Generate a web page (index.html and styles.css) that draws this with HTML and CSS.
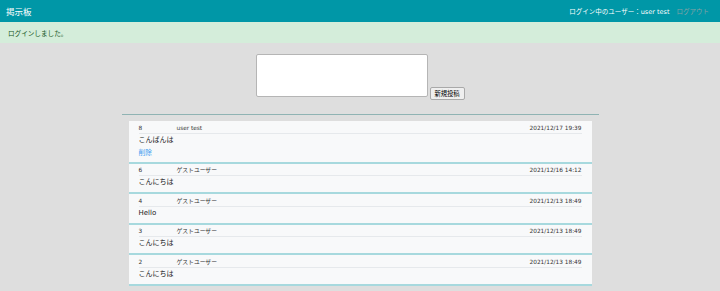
FILE: index.html
```html
<!DOCTYPE html>
<html lang="ja">
<head>
    <meta charset="UTF-8">
    <title>掲示板</title>
    <link rel="stylesheet" href="styles.css">
</head>
<body>

    <div class="header">
        <div class="title">掲示板</div>
        <div class="user-info">
            ログイン中のユーザー：user test
            <a class="logout">ログアウト</a>
        </div>
    </div>

    <div class="flash">ログインしました。</div>

    <form class="post-form">
        <textarea class="post-input"></textarea>
        <button type="button" class="post-btn">新規投稿</button>
    </form>

    <hr class="divider">

    <!-- Posts -->
    <div class="posts">
        <div class="post">
            <div class="post-head">
                <span class="post-id">8</span>
                <span class="post-name">user test</span>
                <span class="post-date">2021/12/17 19:39</span>
            </div>
            <div class="post-body">こんばんは</div>
            <a class="delete">削除</a>
        </div>
        <div class="post">
            <div class="post-head">
                <span class="post-id">6</span>
                <span class="post-name">ゲストユーザー</span>
                <span class="post-date">2021/12/16 14:12</span>
            </div>
            <div class="post-body">こんにちは</div>
        </div>
        <div class="post">
            <div class="post-head">
                <span class="post-id">4</span>
                <span class="post-name">ゲストユーザー</span>
                <span class="post-date">2021/12/13 18:49</span>
            </div>
            <div class="post-body">Hello</div>
        </div>
        <div class="post">
            <div class="post-head">
                <span class="post-id">3</span>
                <span class="post-name">ゲストユーザー</span>
                <span class="post-date">2021/12/13 18:49</span>
            </div>
            <div class="post-body">こんにちは</div>
        </div>
        <div class="post">
            <div class="post-head">
                <span class="post-id">2</span>
                <span class="post-name">ゲストユーザー</span>
                <span class="post-date">2021/12/13 18:49</span>
            </div>
            <div class="post-body">こんにちは</div>
        </div>
    </div>

</body>
</html>
```

FILE: styles.css
```css
body {
    margin: 0;
    background: #dedede;
    font-family: "DejaVu Sans", "Noto Sans CJK JP", sans-serif;
    color: #333;
}

.header {
    height: 22px;
    background: #0097a7;
    display: flex;
    justify-content: space-between;
    align-items: center;
    padding: 0 11px 0 6px;
}

.title {
    color: white;
    font-size: 8.5px;
}

.user-info {
    color: white;
    font-size: 6.5px;
}

.logout {
    color: #8aa2a5;
    margin-left: 5px;
}

.flash {
    height: 21px;
    background: #d4edda;
    color: #155724;
    font-size: 6.6px;
    padding-left: 8px;
    display: flex;
    align-items: center;
}

.post-form {
    display: flex;
    justify-content: center;
    align-items: flex-end;
    gap: 2px;
    margin: 11px 0 0 0;
}

.post-input {
    width: 172px;
    height: 43px;
    box-sizing: border-box;
    border: 1px solid #b5b5b5;
    border-radius: 2px;
    background: white;
    resize: none;
    padding: 0;
    margin: 0;
}

.post-btn {
    width: 35px;
    height: 13px;
    margin-bottom: -3px;
    padding: 0;
    font-family: "Noto Sans CJK JP", sans-serif;
    font-size: 6.3px;
    color: #000;
    background: #efefef;
    border: 1px solid #a9a9a9;
    border-radius: 2px;
}

.divider {
    width: 477px;
    height: 0;
    margin: 17px auto 0;
    border: 0;
    border-top: 1px solid #8fb3b3;
}

.posts {
    width: 463px;
    margin: 6px auto 0;
    background: #f8f9fa;
}

.post {
    padding: 2.5px 10px 5px;
    border-bottom: 2px solid #a7d9de;
}

.post-head {
    display: flex;
    font-size: 5.8px;
    line-height: 9px;
    border-bottom: 1px solid #e6e9ec;
}

.post-id {
    width: 38px;
}

.post-name {
    flex: 1;
}

.post-body {
    font-size: 7px;
    line-height: 10px;
    margin-top: 1px;
    color: #222;
}

.delete {
    display: block;
    font-size: 6.8px;
    line-height: 9px;
    margin: 4px 0 -1px;
    color: #3d9cf0;
}
```
